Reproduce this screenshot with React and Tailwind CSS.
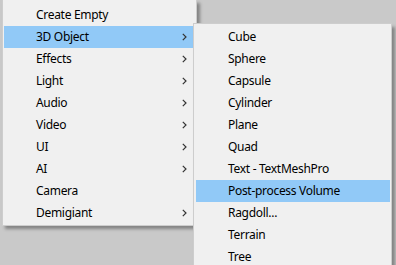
import React from "react";

const Chevron = () => (
  <svg width="5" height="8" viewBox="0 0 5 8" className="shrink-0">
    <path d="M0.8 0.8 L4 4 L0.8 7.2" fill="none" stroke="#333" strokeWidth="1.2" />
  </svg>
);

const mainItems = [
  { label: "Create Empty" },
  { label: "3D Object", sub: true, active: true },
  { label: "Effects", sub: true },
  { label: "Light", sub: true },
  { label: "Audio", sub: true },
  { label: "Video", sub: true },
  { label: "UI", sub: true },
  { label: "AI", sub: true },
  { label: "Camera" },
  { label: "Demigiant", sub: true },
];

const subItems = [
  "Cube",
  "Sphere",
  "Capsule",
  "Cylinder",
  "Plane",
  "Quad",
  "Text - TextMeshPro",
  "Post-process Volume",
  "Ragdoll...",
  "Terrain",
  "Tree",
];

export default function App() {
  return (
    <div
      className="relative w-[396px] h-[265px] overflow-hidden bg-[#c9c9c9] text-[12px] tracking-[-0.3px] text-black"
      style={{ fontFamily: '"Noto Sans", "Open Sans", sans-serif' }}
    >
      <div className="ml-[2px] w-[195px] bg-[#f0f0f0] border-x border-b border-[#cdcdcd] pt-[4px] pb-[1px] px-[1px] shadow-[3px_3px_3px_rgba(0,0,0,0.35)]">
        {mainItems.map((it) => (
          <div
            key={it.label}
            className={`h-[22px] flex items-center justify-between pl-[32px] pr-[8px] ${
              it.active ? "bg-[#91c9f7]" : ""
            }`}
          >
            <span className="leading-none">{it.label}</span>
            {it.sub && <Chevron />}
          </div>
        ))}
      </div>

      <div className="absolute left-[193px] top-[23px] w-[199px] bg-[#f0f0f0] border border-[#cdcdcd] pt-[2px] pl-[2px] pr-[1px] shadow-[3px_4px_3px_rgba(0,0,0,0.35)]">
        {subItems.map((s) => (
          <div
            key={s}
            className={`h-[22px] flex items-center pl-[32px] ${
              s === "Post-process Volume" ? "bg-[#91c9f7]" : ""
            }`}
          >
            <span className="leading-none">{s}</span>
          </div>
        ))}
      </div>
    </div>
  );
}
